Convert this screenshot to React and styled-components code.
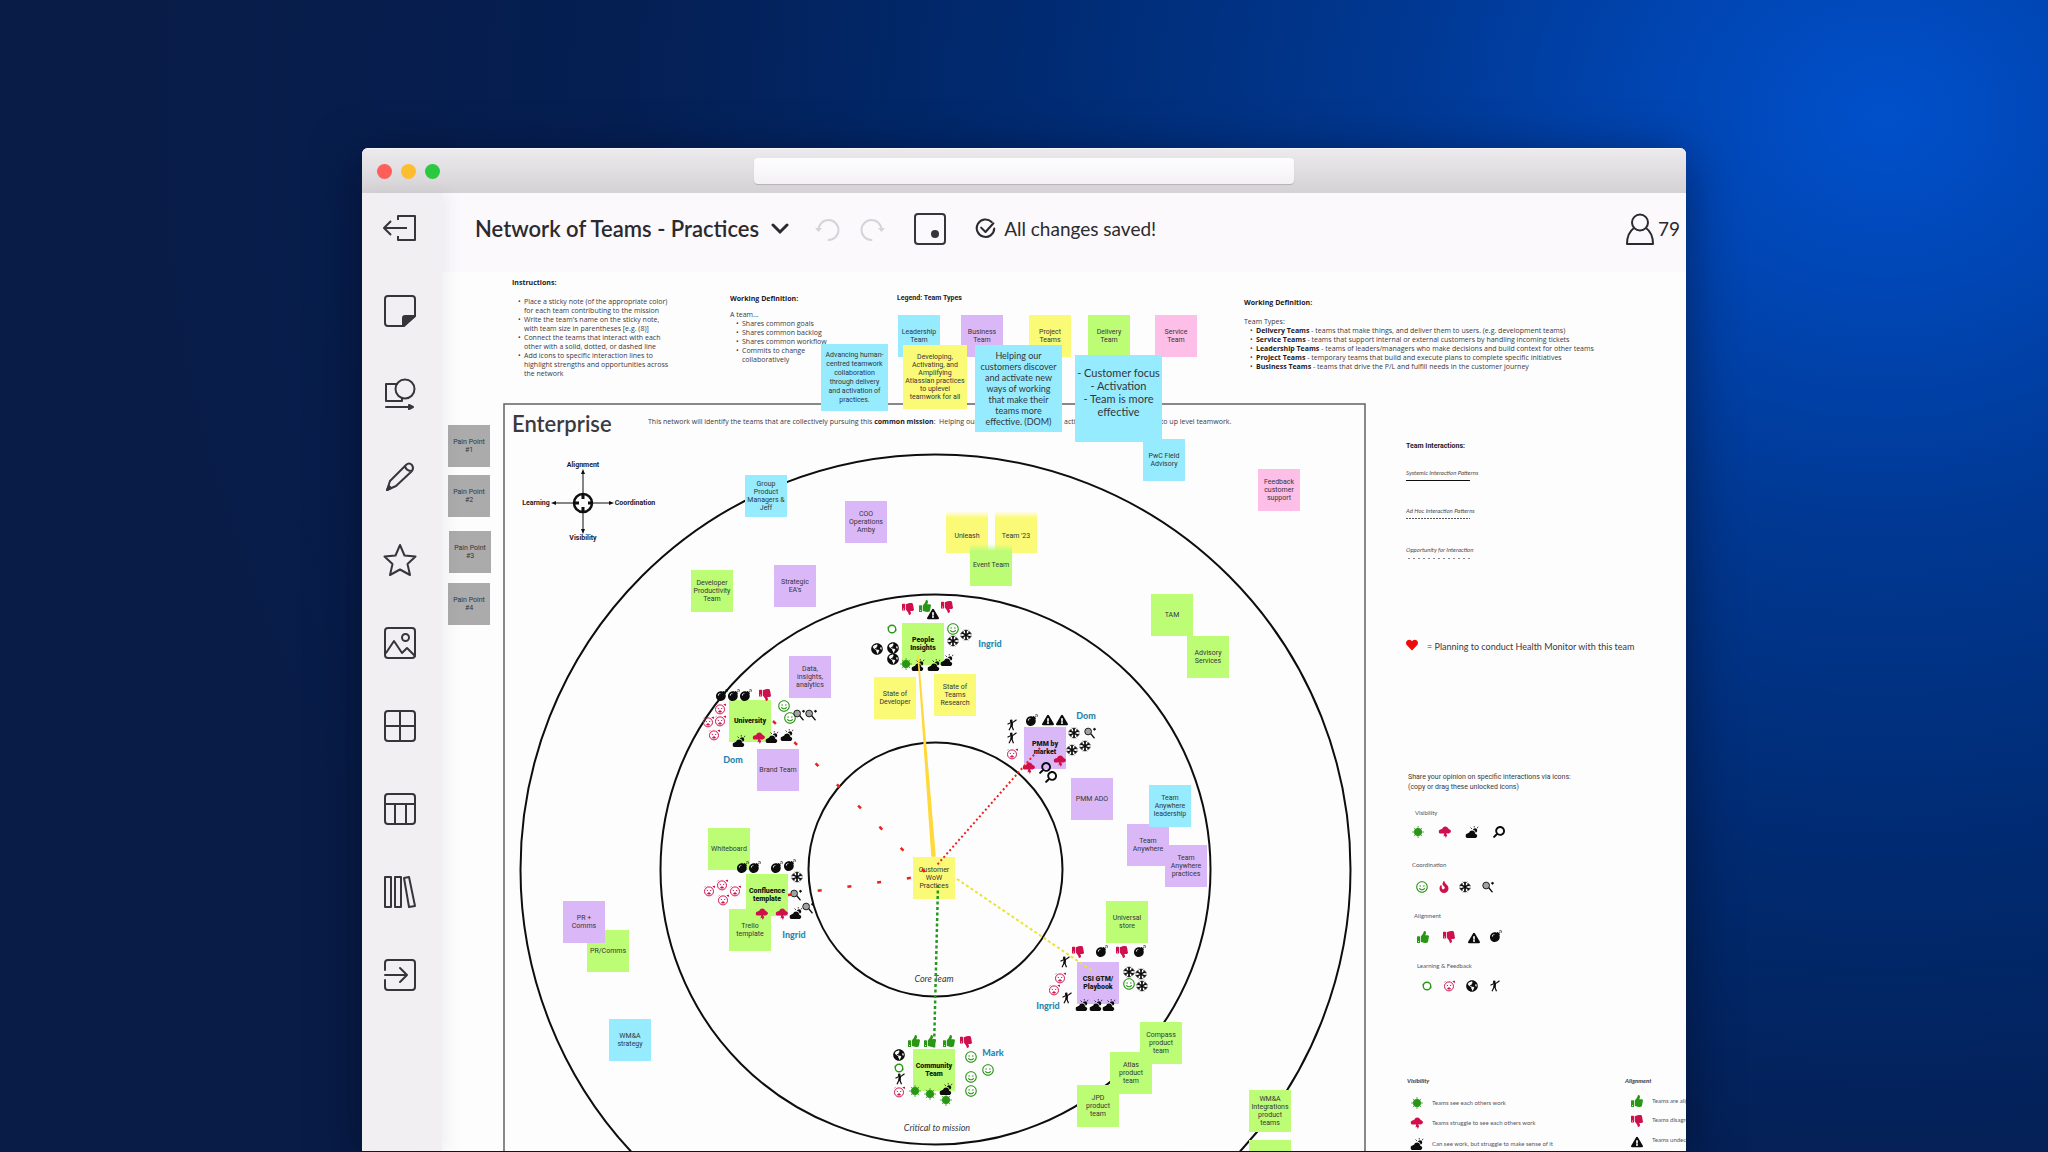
import React from "react";
import styled, { createGlobalStyle } from "styled-components";
import {
  FaBomb,
  FaThumbsUp,
  FaThumbsDown,
  FaRegSmile,
  FaFire,
  FaHeart,
  FaSearch,
  FaExclamationTriangle,
  FaGlobeAmericas
} from "react-icons/fa";

const GlobalStyle = createGlobalStyle`
  * {
    box-sizing: border-box;
  }
  body {
    margin: 0;
    font-family: Lato, "Open Sans", sans-serif;
    color: #2c2a2e;
  }
  button, input {
    font-family: inherit;
    color: inherit;
  }
`;

const noteFont = 'Roboto, "Open Sans", sans-serif';
const textFont = '"Open Sans", sans-serif';

const colors = {
  cyan: "#97ebfe",
  purple: "#dab8f8",
  yellow: "#fbfa77",
  green: "#bdfd76",
  pink: "#fdbfe8",
  gray: "#acabac"
};

const iconColors = {
  good: "#2a9616",
  bad: "#d0104c",
  plain: "#0c0c0c"
};

/* Window */

const Page = styled.div`
  height: 100vh;
  padding-top: 148px;
  padding-bottom: 1px;
  overflow: hidden;
  display: flex;
  justify-content: center;
  background-color: #071c49;
  background-image: radial-gradient(
    ellipse 1750px 1500px at 92% 10%,
    #0050cb 0%,
    #0046b4 12%,
    #003892 28%,
    #002a70 50%,
    #051f53 72%,
    #081c47 100%
  );
`;

const Window = styled.div`
  width: 100%;
  max-width: 1324px;
  display: flex;
  flex-direction: column;
  border-radius: 6px 6px 0 0;
  background-color: #fefdfe;
  box-shadow: 0 10px 50px rgba(0, 5, 25, 0.5);
  overflow: hidden;
`;

const TitleBar = styled.div`
  flex: none;
  height: 45px;
  padding: 0 15px;
  display: grid;
  grid-template-columns: 1fr minmax(0, 540px) 1fr;
  align-items: center;
  background-image: linear-gradient(#eceaed, #d5d2d6);
  border-top: 1px solid #f6f5f7;
`;

const Lights = styled.div`
  display: flex;
  gap: 9px;
`;

const Light = styled.span`
  width: 15px;
  height: 15px;
  border-radius: 50%;
  background-color: ${props => props.$color};
`;

const Address = styled.input`
  width: 100%;
  height: 26px;
  border: 0;
  border-radius: 4px;
  background-image: linear-gradient(#fefdfe, #f3f1f4);
  box-shadow: 0 1px 1px #b5b2b6;
`;

const Workspace = styled.div`
  flex: 1;
  min-height: 0;
  display: flex;
`;

const Sidebar = styled.nav`
  flex: none;
  width: 80px;
  padding: 20px 0 0 23px;
  display: flex;
  flex-direction: column;
  gap: 53px;
  background-color: #f1eff2;
  box-shadow: 6px 0 14px rgba(60, 50, 70, 0.07);
  z-index: 1;
`;

const IconButton = styled.button`
  flex: none;
  padding: 0;
  border: 0;
  background: none;
  display: flex;
  width: ${props => props.$size || 30}px;
  height: ${props => props.$size || 30}px;
  color: ${props => (props.$muted ? "#d6d4d8" : "#37353a")};
  svg {
    width: 100%;
    height: 100%;
    overflow: visible;
  }
`;

const Main = styled.main`
  flex: 1;
  min-width: 0;
  display: flex;
  flex-direction: column;
`;

const TopBar = styled.header`
  flex: none;
  height: 79px;
  padding: 0 6px 8px 33px;
  display: flex;
  align-items: center;
  background-color: #fbf9fc;
`;

const Title = styled.button`
  padding: 0;
  border: 0;
  background: none;
  display: flex;
  align-items: center;
  gap: 12px;
  font-size: 22px;
  font-weight: 600;
  svg {
    width: 18px;
    height: 12px;
  }
`;

const History = styled.div`
  margin: 0 30px 0 26px;
  display: flex;
  gap: 20px;
`;

const Status = styled.div`
  margin-left: 30px;
  display: flex;
  align-items: center;
  gap: 8px;
  font-size: 19px;
  svg {
    width: 21px;
    height: 21px;
  }
`;

const People = styled.div`
  margin-left: auto;
  display: flex;
  align-items: center;
  gap: 4px;
  font-size: 19px;
  svg {
    width: 28px;
    height: 32px;
  }
`;

/* Board */

const Board = styled.section`
  flex: 1;
  position: relative;
  overflow: hidden;
`;

// the surface is panned so that (442, 272) sits in the corner of the board
const Surface = styled.div`
  position: absolute;
  top: 0;
  left: 0;
  transform: translate(-442px, -272px);
`;

const Layer = styled.svg`
  position: absolute;
  top: 0;
  left: 0;
  width: 1800px;
  height: 1300px;
  fill: none;
`;

const place = props => ({ style: { left: props.$x, top: props.$y } });

const Note = styled.div.attrs(place)`
  position: absolute;
  width: ${props => props.$size}px;
  height: ${props => props.$size}px;
  display: flex;
  align-items: center;
  justify-content: center;
  text-align: center;
  white-space: pre;
  font-family: ${props => (props.$font > 8 ? "inherit" : noteFont)};
  font-size: ${props => props.$font}px;
  line-height: ${props => props.$line}px;
  font-weight: ${props => (props.$bold ? 900 : 400)};
  color: ${props => (props.$bold ? "#141a0c" : "#33363a")};
  background: ${props =>
    props.$torn
      ? `linear-gradient(transparent, ${colors[props.$color]} 7px)`
      : colors[props.$color]};
`;

const Sticker = styled.span.attrs(place)`
  position: absolute;
  width: 12px;
  height: 12px;
  transform: translate(-50%, -50%);
  color: ${props => iconColors[props.$tone]};
  svg {
    display: block;
    width: 100%;
    height: 100%;
    overflow: visible;
  }
`;

const Label = styled.span.attrs(place)`
  position: absolute;
  transform: translate(${props => (props.$center ? "-50%" : "0")}, -50%);
  white-space: pre;
  font-family: ${props => (props.$font ? "inherit" : noteFont)};
  font-size: ${props => props.$font || 7}px;
  line-height: ${props => (props.$font > 8 ? "normal" : "10px")};
  font-weight: ${props => props.$weight || 400};
  font-style: ${props => (props.$italic ? "italic" : "normal")};
  color: ${props => props.$ink || "#3a383c"};
`;

const TextBlock = styled.div.attrs(place)`
  position: absolute;
  white-space: nowrap;
  font-family: ${textFont};
  font-size: 7px;
  line-height: 9px;
  color: #3a383c;
  h2 {
    margin: 0 0 ${props => props.$gap}px;
    font-size: 7px;
    line-height: 9px;
    font-weight: 700;
    color: #1c1a1e;
  }
  p {
    margin: 0;
  }
  ul {
    margin: 0;
    padding: 0 0 0 12px;
  }
  li {
    white-space: pre;
    list-style: none;
    position: relative;
  }
  li::before {
    content: "•";
    position: absolute;
    left: -6px;
  }
  b {
    font-weight: 700;
    color: #1c1a1e;
  }
`;

/* Drawn icons */

const Stroke = ({ children, box = "0 0 30 30", width = 2 }) => (
  <svg viewBox={box} fill="none" stroke="currentColor" strokeWidth={width} strokeLinejoin="round" strokeLinecap="round">
    {children}
  </svg>
);

const Exit = () => (
  <Stroke>
    <path d="M13 7V3h17v24H13v-4M-1 15h23M6 8l-7 7 7 7" strokeLinecap="butt" />
  </Stroke>
);
const StickyNote = () => (
  <Stroke>
    <path d="M3 0h24q3 0 3 3v17L19 30H3q-3 0-3-3V3q0-3 3-3z" />
    <path d="M30 20H20q-2 0-2 2v8z" fill="currentColor" />
  </Stroke>
);
const Shapes = () => (
  <Stroke>
    <path d="M12 5H1v17h16v-3M1 28h24" />
    <circle cx="20" cy="10" r="9.5" />
    <path d="M24 26l4 2-4 2z" fill="currentColor" />
  </Stroke>
);
const Pencil = () => (
  <Stroke>
    <path d="M2 28l3-9L21 3q3-3 6 0 2 3 0 6L11 24zM20 4q1 5 7 5" />
    <path d="M2 28l2-4 2 2z" fill="currentColor" />
  </Stroke>
);
const Star = () => (
  <Stroke>
    <path d="M15 0l4.500 10.500 11 1-8 7.500 2.500 11-10-5.500-10 5.500 2.500-11-8-7.500 11-1z" />
  </Stroke>
);
const Picture = () => (
  <Stroke>
    <rect width="30" height="30" rx="3" />
    <circle cx="20.500" cy="9.500" r="3.500" />
    <path d="M1 25l8-12 8 12 5-5 8 8" />
  </Stroke>
);
const Grid = () => (
  <Stroke>
    <rect width="30" height="30" rx="3" />
    <path d="M15 0v30M0 15h30" />
  </Stroke>
);
const TableIcon = () => (
  <Stroke>
    <rect width="30" height="30" rx="3" />
    <path d="M0 10h30M10 10v20M21 10v20" />
  </Stroke>
);
const Library = () => (
  <Stroke>
    <path d="M0 0h6v30H0zM10 0h6v30h-6zM19 1l5-1 6 29-6 1z" />
  </Stroke>
);
const Import = () => (
  <Stroke>
    <path d="M0 10V3q0-3 3-3h24q3 0 3 3v24q0 3-3 3H3q-3 0-3-3v-7M0 15h21M15 8l7 7-7 7" />
  </Stroke>
);
const Undo = () => (
  <Stroke box="0 0 25 25">
    <path d="M3.500 14a10 10 0 1 1 10 10" />
    <path d="M0 12h7l-3.500 4z" fill="currentColor" stroke="none" />
  </Stroke>
);
const Redo = () => (
  <Stroke box="0 0 25 25">
    <path d="M21.500 14a10 10 0 1 0-10 10" />
    <path d="M25 12h-7l3.500 4z" fill="currentColor" stroke="none" />
  </Stroke>
);
const Minimap = () => (
  <Stroke>
    <rect width="30" height="30" rx="3" />
    <circle cx="20" cy="20" r="4" fill="currentColor" stroke="none" />
  </Stroke>
);
const Saved = () => (
  <Stroke box="0 0 24 24" width={2.4}>
    <path d="M19 4.500A10 10 0 1 0 22 12" />
    <path d="M7 11l5 5 9-10" />
  </Stroke>
);
const Person = () => (
  <Stroke box="0 0 28 32">
    <circle cx="14" cy="9.500" r="8" />
    <path d="M8 15Q1 20 1 31h26q0-11-7-16" />
  </Stroke>
);
const Chevron = () => (
  <Stroke box="0 0 18 12" width={3}>
    <path d="M2 2l7 7 7-7" strokeLinejoin="miter" />
  </Stroke>
);

const Sun = () => (
  <svg viewBox="0 0 16 16" fill="currentColor" stroke="currentColor">
    <circle cx="8" cy="8" r="5" />
    <path d="M8 0v16M0 8h16M2.500 2.500l11 11M13.500 2.500l-11 11" />
  </svg>
);
const Cloud = () => (
  <svg viewBox="0 0 16 16" fill="currentColor">
    <path d="M3 16a3 3 0 0 1-1-6q1-1 2-1 1-3 4-3 4 0 4 4 3 1 3 3t-2 3z" />
    <path d="M9 5q1-2 3-2 3 0 3 3 0 2-2 3-1-4-4-4z" />
    <path d="M11 2V0M15 3l1-2M8 4L6 2" stroke="currentColor" />
  </svg>
);
const Storm = () => (
  <svg viewBox="0 0 16 16" fill="currentColor">
    <path d="M1 10a3 3 0 0 1 0-5q2-1 3-1 2-4 6-3 2 1 3 3 3 1 3 3t-3 3H9l2 2-2 4-1-3-2 1 1-4z" />
  </svg>
);
const Snow = () => (
  <svg viewBox="0 0 16 16" fill="none" stroke="currentColor" strokeWidth="1.3">
    <path d="M8 1v14M2 4.500l12 7M14 4.500l-12 7" strokeWidth="2.2" />
    <path d="M5.500 1L8 3.500 10.500 1M5.500 15L8 12.500l2.500 2.500M.500 6.500l3.500-.500V2.500M15.500 9.500L12 10v3.500M15.500 6.500L12 6V2.500M.500 9.500L4 10v3.500" />
  </svg>
);
const Racquet = () => (
  <svg viewBox="0 0 16 16" fill="none" stroke="currentColor" strokeWidth="1.2">
    <circle cx="5.500" cy="6" r="4.500" fill="#a2a2a2" />
    <path d="M9 9l5 6" strokeWidth="1.6" />
    <circle cx="14" cy="3" r="1.200" fill="currentColor" />
  </svg>
);
const Ring = () => (
  <svg viewBox="0 0 16 16" fill="none" stroke="currentColor" strokeWidth="1.8">
    <circle cx="8" cy="8" r="5" />
    <path d="M2.500 7l1-2M13.500 9l-1 2" />
  </svg>
);
const Alarm = () => (
  <svg viewBox="0 0 16 16" fill="none" stroke="currentColor" strokeWidth="1.3">
    <circle cx="8" cy="8.500" r="6" />
    <path d="M2 3l1-1M13 2l3 0M15 1v3M5 7l1.500.500M11 7l-1.500.500" />
    <path d="M6 12q2-4 4 0z" fill="currentColor" />
  </svg>
);
const Figure = () => (
  <svg viewBox="0 0 16 16" fill="none" stroke="currentColor" strokeWidth="1.6">
    <path d="M2 7l4-2 4-1 4-3M8 5v5l2 5M7 9l-3 6" />
    <circle cx="7" cy="2.500" r="1" />
    <path d="M8 4l-1 6" strokeWidth="3" />
  </svg>
);

const stickers = {
  bomb: [FaBomb, "plain"],
  up: [FaThumbsUp, "good"],
  down: [FaThumbsDown, "bad"],
  smile: [FaRegSmile, "good"],
  fire: [FaFire, "bad"],
  search: [FaSearch, "plain", true],
  warn: [FaExclamationTriangle, "plain"],
  globe: [FaGlobeAmericas, "plain"],
  cloud: [Cloud, "plain"],
  sun: [Sun, "good"],
  storm: [Storm, "bad"],
  snow: [Snow, "plain"],
  racquet: [Racquet, "plain"],
  ring: [Ring, "good"],
  alarm: [Alarm, "bad"],
  figure: [Figure, "plain"]
};

/* Data */

const tools = [
  ["Exit", Exit],
  ["Sticky note", StickyNote],
  ["Shapes", Shapes],
  ["Draw", Pencil],
  ["Icons", Star],
  ["Images", Picture],
  ["Frameworks", Grid],
  ["Table", TableIcon],
  ["Library", Library],
  ["Import", Import]
];

// x, y, color, text
const notes = [
  [448, 425, "gray", "Pain Point\n#1"],
  [448, 475, "gray", "Pain Point\n#2"],
  [449, 531, "gray", "Pain Point\n#3"],
  [448, 583, "gray", "Pain Point\n#4"],
  [898, 315, "cyan", "Leadership\nTeam"],
  [961, 315, "purple", "Business\nTeam"],
  [1029, 315, "yellow", "Project\nTeams"],
  [1088, 315, "green", "Delivery\nTeam"],
  [1155, 315, "pink", "Service\nTeam"],
  [1143, 439, "cyan", "PwC Field\nAdvisory"],
  [821, 344, "cyan", "Advancing human-\ncentred teamwork\ncollaboration\nthrough delivery\nand activation of\npractices.", { size: 67, line: 9 }],
  [903, 345, "yellow", "Developing,\nActivating, and\nAmplifying\nAtlassian practices\nto uplevel\nteamwork for all", { size: 64 }],
  [975, 345, "cyan", "Helping our\ncustomers discover\nand activate new\nways of working\nthat make their\nteams more\neffective. (DOM)", { size: 87, font: 9, line: 11 }],
  [1075, 355, "cyan", "- Customer focus\n- Activation\n- Team is more\neffective\n\u00a0", { size: 87, font: 11, line: 13 }],
  [745, 475, "cyan", "Group\nProduct\nManagers &\nJeff"],
  [845, 501, "purple", "COO\nOperations\nAmby"],
  [946, 511, "yellow", "\nUnleash", { torn: true }],
  [995, 511, "yellow", "\nTeam '23", { torn: true }],
  [970, 544, "green", "Event Team", { torn: true }],
  [1258, 469, "pink", "Feedback\ncustomer\nsupport"],
  [691, 570, "green", "Developer\nProductivity\nTeam"],
  [774, 565, "purple", "Strategic\nEA's"],
  [1151, 594, "green", "TAM"],
  [1187, 636, "green", "Advisory\nServices"],
  [789, 656, "purple", "Data,\ninsights,\nanalytics"],
  [729, 700, "green", "University", { bold: true }],
  [757, 749, "purple", "Brand Team"],
  [902, 623, "green", "People\nInsights", { bold: true }],
  [874, 677, "yellow", "State of\nDeveloper"],
  [934, 674, "yellow", "State of\nTeams\nResearch"],
  [1024, 727, "purple", "PMM by\nmarket", { bold: true }],
  [1071, 778, "purple", "PMM ADO"],
  [1127, 824, "purple", "Team\nAnywhere"],
  [1165, 845, "purple", "Team\nAnywhere\npractices"],
  [1149, 785, "cyan", "Team\nAnywhere\nleadership"],
  [708, 828, "green", "Whiteboard"],
  [729, 909, "green", "Trello\ntemplate"],
  [746, 874, "green", "Confluence\ntemplate", { bold: true }],
  [913, 857, "yellow", "Customer\nWoW\nPractices"],
  [1106, 901, "green", "Universal\nstore"],
  [1077, 962, "purple", "CSI GTM/\nPlaybook", { bold: true }],
  [587, 930, "green", "PR/Comms"],
  [563, 901, "purple", "PR +\nComms"],
  [609, 1019, "cyan", "WM&A\nstrategy"],
  [1110, 1052, "green", "Atlas\nproduct\nteam"],
  [1140, 1022, "green", "Compass\nproduct\nteam"],
  [1077, 1085, "green", "JPD\nproduct\nteam"],
  [913, 1049, "green", "Community\nTeam", { bold: true }],
  [1249, 1090, "green", "WM&A\nIntegrations\nproduct\nteams"],
  [1249, 1140, "green", ""]
];

const marks = {
  down: [[908, 609], [947, 607], [765, 695], [1078, 952], [1122, 952], [966, 1042], [1449, 937], [1637, 1121]],
  up: [[925, 606], [914, 1041], [930, 1041], [949, 1041], [1423, 937], [1637, 1101]],
  warn: [[933, 614], [1048, 720], [1062, 720], [1474, 938], [1637, 1142]],
  ring: [[892, 629], [899, 1068], [1427, 986]],
  globe: [[877, 649], [893, 648], [893, 659], [899, 1055], [1472, 986]],
  smile: [[953, 629], [784, 706], [790, 718], [1129, 984], [971, 1057], [988, 1070], [971, 1077], [971, 1091], [1422, 887]],
  snow: [[966, 635], [953, 641], [797, 877], [1074, 733], [1085, 746], [1072, 750], [1129, 972], [1141, 974], [1142, 986], [1465, 887]],
  sun: [[906, 664], [915, 1091], [930, 1094], [946, 1100], [1418, 832], [1417, 1103]],
  cloud: [[918, 665], [934, 665], [947, 660], [739, 741], [772, 737], [787, 735], [796, 913], [1082, 1005], [1096, 1005], [1109, 1005], [946, 1089], [1472, 832], [1417, 1144]],
  bomb: [[722, 695], [734, 695], [746, 695], [743, 867], [755, 867], [777, 867], [790, 865], [1032, 720], [1102, 951], [1140, 951], [1496, 936]],
  alarm: [[720, 709], [708, 722], [720, 721], [714, 735], [709, 891], [722, 885], [735, 891], [723, 900], [1012, 754], [1060, 978], [1054, 990], [899, 1092], [1449, 986]],
  racquet: [[799, 715], [811, 715], [796, 895], [808, 908], [1090, 733], [1488, 887]],
  storm: [[759, 738], [762, 914], [782, 914], [1029, 768], [1060, 761], [1445, 832], [1417, 1123]],
  search: [[1045, 768], [1051, 777], [1499, 832]],
  figure: [[1012, 725], [1012, 738], [1065, 962], [1067, 998], [900, 1079], [1495, 986]],
  fire: [[1444, 887]]
};

const name = { font: 9, weight: 900, center: true, ink: "#2b86ae" };
const heading = { weight: 700, ink: "#1c1a1e" };
const small = { font: 6, ink: "#55535a" };
const pattern = { font: 6, italic: true, ink: "#4a484c" };
const zone = { font: 9, italic: true, center: true };

const labels = [
  [512, 423, "Enterprise", { font: 22, weight: 600, ink: "#3c3a3e" }],
  [583, 465, "Alignment", { ...heading, center: true }],
  [583, 538, "Visibility", { ...heading, center: true }],
  [536, 503, "Learning", { ...heading, center: true }],
  [635, 503, "Coordination", { ...heading, center: true }],
  [990, 643, "Ingrid", name],
  [733, 759, "Dom", name],
  [794, 934, "Ingrid", name],
  [1086, 715, "Dom", name],
  [1048, 1005, "Ingrid", name],
  [993, 1052, "Mark", name],
  [934, 978, "Core Team", zone],
  [937, 1127, "Critical to mission", zone],
  [897, 298, "Legend: Team Types", heading],
  [1406, 446, "Team Interactions:", heading],
  [1406, 473, "Systemic Interaction Patterns", pattern],
  [1406, 511, "Ad Hoc Interaction Patterns", pattern],
  [1406, 550, "Opportunity for Interaction", pattern],
  [1427, 646, "= Planning to conduct Health Monitor with this team", { font: 9 }],
  [1408, 782, "Share your opinion on specific interactions via icons:\n(copy or drag these unlocked icons)", {}],
  [1415, 813, "Visibility", small],
  [1412, 865, "Coordination", small],
  [1414, 916, "Alignment", small],
  [1417, 966, "Learning & Feedback", small],
  [1407, 1081, "Visibility", { ...pattern, weight: 900 }],
  [1625, 1081, "Alignment", { ...pattern, weight: 900 }],
  [1432, 1103, "Teams see each others work", small],
  [1432, 1123, "Teams struggle to see each others work", small],
  [1432, 1144, "Can see work, but struggle to make sense of it", small],
  [1652, 1101, "Teams are aligned", small],
  [1652, 1120, "Teams disagree", small],
  [1652, 1140, "Teams undecided", small]
];

const Rings = () => (
  <Layer stroke="#0e0e0e" strokeWidth="2">
    <path d="M504 1300V404H1365V1300" stroke="#626064" strokeWidth="1.5" />
    <circle cx="935.500" cy="869.500" r="127" />
    <circle cx="935.500" cy="869.500" r="275" />
    <circle cx="935.500" cy="869.500" r="415" />
    <circle cx="583" cy="503" r="9" strokeWidth="2.5" />
    <path d="M583 493V473M583 513v17M573 503h-19M593 503h18" strokeWidth="1" />
    <path d="M583 494v5M583 507v5M574 503h5M588 503h5" strokeWidth="3" />
    <path d="M583 469l2 5h-4zM583 534l2-5h-4zM551 503l5-2v4zM614 503l-5-2v4z" fill="#0e0e0e" stroke="none" />
    <path d="M1406 480.500h64" strokeWidth="1" />
    <path d="M1406 518.500h64" strokeWidth="1" strokeDasharray="2 1" opacity="0.7" />
    <path d="M1408 558.500h64" strokeWidth="1" strokeDasharray="2 3" opacity="0.5" />
  </Layer>
);

const Connections = () => (
  <Layer strokeWidth="2">
    <path d="M918 655l14 201h3z" fill="#ffd83a" stroke="#ffd83a" strokeWidth="1.5" />
    <path d="M1040 748L937 865" stroke="#ea1f1f" strokeDasharray="2 2.500" />
    <path d="M938 885l-4 164" stroke="#239a1d" strokeWidth="2.5" strokeDasharray="3 2.500" />
    <path d="M957 879L1094 972" stroke="#e9e338" strokeDasharray="3 2.500" />
    <path d="M773 721L926 873" stroke="#e8231c" strokeWidth="2.5" strokeDasharray="4 26" />
    <path d="M788 895L924 876" stroke="#e8231c" strokeWidth="2.5" strokeDasharray="4 26" />
  </Layer>
);

export default () => (
  <>
    <GlobalStyle />
    <Page>
      <Window>
        <TitleBar>
          <Lights>
            <Light $color="#fe5f58" />
            <Light $color="#febc2f" />
            <Light $color="#2ac940" />
          </Lights>
          <Address type="text" aria-label="Address" />
        </TitleBar>
        <Workspace>
          <Sidebar>
            {tools.map(([label, Icon]) => (
              <IconButton key={label} aria-label={label}>
                <Icon />
              </IconButton>
            ))}
          </Sidebar>
          <Main>
            <TopBar>
              <Title>
                Network of Teams - Practices
                <Chevron />
              </Title>
              <History>
                <IconButton $size={25} $muted aria-label="Undo">
                  <Undo />
                </IconButton>
                <IconButton $size={25} $muted aria-label="Redo">
                  <Redo />
                </IconButton>
              </History>
              <IconButton aria-label="Minimap">
                <Minimap />
              </IconButton>
              <Status>
                <Saved />
                All changes saved!
              </Status>
              <People>
                <Person />
                79
              </People>
            </TopBar>
            <Board>
              <Surface>
                <Rings />
                <TextBlock $x={512} $y={278} $gap={10}>
                  <h2>Instructions:</h2>
                  <ul>
                    <li>{"Place a sticky note (of the appropriate color)\nfor each team contributing to the mission"}</li>
                    <li>{"Write the team's name on the sticky note,\nwith team size in parentheses [e.g. (8)]"}</li>
                    <li>{"Connect the teams that interact with each\nother with a solid, dotted, or dashed line"}</li>
                    <li>{"Add icons to specific interaction lines to\nhighlight strengths and opportunities across\nthe network"}</li>
                  </ul>
                </TextBlock>
                <TextBlock $x={730} $y={294} $gap={7}>
                  <h2>Working Definition:</h2>
                  <p>A team...</p>
                  <ul>
                    <li>Shares common goals</li>
                    <li>Shares common backlog</li>
                    <li>Shares common workflow</li>
                    <li>{"Commits to change\ncollaboratively"}</li>
                  </ul>
                </TextBlock>
                <TextBlock $x={1244} $y={298} $gap={10}>
                  <h2>Working Definition:</h2>
                  <p>Team Types:</p>
                  <ul>
                    <li><b>Delivery Teams</b> - teams that make things, and deliver them to users. (e.g. development teams)</li>
                    <li><b>Service Teams</b> - teams that support internal or external customers by handling incoming tickets</li>
                    <li><b>Leadership Teams</b> - teams of leaders/managers who make decisions and build context for other teams</li>
                    <li><b>Project Teams</b> - temporary teams that build and execute plans to complete specific initiatives</li>
                    <li><b>Business Teams</b> - teams that drive the P/L and fulfill needs in the customer journey</li>
                  </ul>
                </TextBlock>
                <TextBlock $x={648} $y={417}>
                  <p>
                    This network will identify the teams that are collectively pursuing this <b>common mission</b>:
                    {"\u00a0 "}Helping our customers and teams will activate new ways of working to up level teamwork.
                  </p>
                </TextBlock>
                {notes.map(([x, y, color, text, opts = {}]) => (
                  <Note
                    key={`${x}-${y}`}
                    $x={x}
                    $y={y}
                    $color={color}
                    $size={opts.size || 42}
                    $font={opts.font || 7}
                    $line={opts.line || 8}
                    $bold={opts.bold}
                    $torn={opts.torn}
                  >
                    {text}
                  </Note>
                ))}
                {labels.map(([x, y, text, opts]) => (
                  <Label
                    key={`${x}-${y}`}
                    $x={x}
                    $y={y}
                    $font={opts.font}
                    $weight={opts.weight}
                    $italic={opts.italic}
                    $center={opts.center}
                    $ink={opts.ink}
                  >
                    {text}
                  </Label>
                ))}
                {Object.entries(marks).map(([kind, spots]) => {
                  const [Icon, tone, flip] = stickers[kind];
                  return spots.map(([x, y]) => (
                    <Sticker key={`${kind}-${x}-${y}`} $x={x} $y={y} $tone={tone}>
                      <Icon transform={flip ? "scale(-1 1)" : undefined} />
                    </Sticker>
                  ));
                })}
                <Sticker $x={1412} $y={645} $tone="bad">
                  <FaHeart color="#ee0d0d" />
                </Sticker>
                <Connections />
              </Surface>
            </Board>
          </Main>
        </Workspace>
      </Window>
    </Page>
  </>
);
